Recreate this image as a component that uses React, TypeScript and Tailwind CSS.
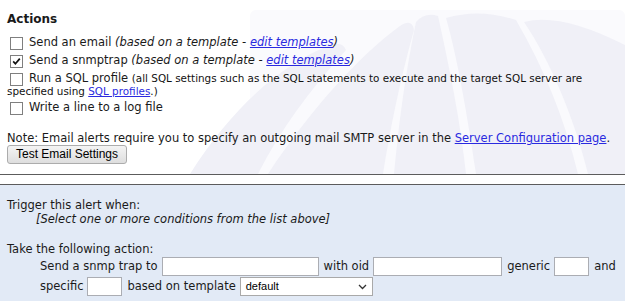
import React from "react";

function Box({ checked = false }: { checked?: boolean }) {
  return (
    <span className="inline-flex w-[13px] h-[13px] shrink-0 border border-[#7f7f7f] bg-white items-center justify-center">
      {checked && (
        <svg width="11" height="11" viewBox="0 0 11 11">
          <path d="M2.2 5.4 L4.4 7.8 L8.8 2.6" fill="none" stroke="#111" strokeWidth="1.7" />
        </svg>
      )}
    </span>
  );
}

function Watermark() {
  return (
    <svg className="absolute left-0 top-0 pointer-events-none" width="625" height="174" viewBox="0 0 625 174">
      <rect x="250" y="10" width="375" height="164" rx="6" fill="#fafafd" />
      <g fill="#f0f0f7">
        <path d="M190 174 C230 110 280 65 328 46 Q342 40 346 50 C310 90 280 130 258 174 Z" />
        <path d="M268 174 C310 110 360 55 400 26 Q412 18 414 30 C400 80 390 130 383 174 Z" />
        <path d="M394 174 C400 110 408 60 416 22 Q425 12 438 16 C450 70 460 120 466 174 Z" />
        <path d="M476 174 C468 120 458 60 446 18 Q480 8 516 20 C545 70 565 120 578 174 Z" />
        <path d="M588 174 C575 120 550 60 524 22 Q560 12 625 45 L625 174 Z" />
      </g>
    </svg>
  );
}

const link = "text-[#2a2ae0] underline";

function Input({ w }: { w: string }) {
  return <span className={`inline-block h-[19px] border border-[#abadb3] bg-white ${w}`} />;
}

export default function App() {
  return (
    <div className="w-[625px] h-[301px] overflow-hidden bg-white text-[#1a1a1a] font-['DejaVu_Sans',Verdana,sans-serif] text-[11.5px]">
      <div className="relative h-[174px] px-[7px] pt-[11px]">
        <Watermark />
        <div className="relative">
          <div className="font-bold text-[12px] leading-[16px]">Actions</div>
          <div className="mt-[7px]">
            <div className="h-[18px] flex items-center pl-[3px] gap-[6px] whitespace-nowrap">
              <Box />
              <span>
                Send an email <i>(based on a template - <span className={link}>edit templates</span>)</i>
              </span>
            </div>
            <div className="h-[18px] flex items-center pl-[3px] gap-[6px] whitespace-nowrap">
              <Box checked />
              <span>
                Send a snmptrap <i>(based on a template - <span className={link}>edit templates</span>)</i>
              </span>
            </div>
            <div className="h-[18px] flex items-center pl-[3px] gap-[6px] whitespace-nowrap">
              <Box />
              <span>
                Run a SQL profile{" "}
                <span className="text-[10.4px] text-[#111]">
                  (all SQL settings such as the SQL statements to execute and the target SQL server are
                </span>
              </span>
            </div>
            <div className="mt-[-3px] h-[12px] leading-[12px] text-[10.4px] text-[#111] whitespace-nowrap">
              specified using <span className={link}>SQL profiles</span>.)
            </div>
            <div className="mt-[2px] h-[18px] flex items-center pl-[3px] gap-[6px] whitespace-nowrap">
              <Box />
              <span>Write a line to a log file</span>
            </div>
          </div>
          <div className="mt-[14px] leading-[14px] whitespace-nowrap">
            Note: Email alerts require you to specify an outgoing mail SMTP server in the{" "}
            <span className={link}>Server Configuration page</span>.
          </div>
          <button className="h-[19px] px-[8px] border border-[#acacac] rounded-[3px] bg-gradient-to-b from-[#f4f4f4] to-[#dedede] font-['Liberation_Sans',Arial,sans-serif] text-[12px] leading-[17px] text-black">
            Test Email Settings
          </button>
        </div>
      </div>
      <div className="h-px bg-[#5c5c5c]" />
      <div className="h-[9px]" />
      <div className="h-px bg-[#5c5c5c]" />
      <div className="h-[116px] bg-[#e2eaf6] px-[7px] pt-[13px] whitespace-nowrap">
        <div className="leading-[14px]">Trigger this alert when:</div>
        <div className="leading-[14px] pl-[29px] italic">[Select one or more conditions from the list above]</div>
        <div className="mt-[16px] leading-[14px]">Take the following action:</div>
        <div className="pl-[33px]">
          <div className="h-[19px] flex items-center gap-[4px] mt-[1px]">
            <span>Send a snmp trap to</span>
            <Input w="w-[157px]" />
            <span className="ml-[1px]">with oid</span>
            <Input w="w-[129px]" />
            <span className="ml-[1px]">generic</span>
            <Input w="w-[35px]" />
            <span className="ml-[1px]">and</span>
          </div>
          <div className="h-[19px] flex items-center gap-[4px] mt-[1px]">
            <span>specific</span>
            <Input w="w-[35px]" />
            <span className="ml-[1px]">based on template</span>
            <span className="relative inline-flex items-center h-[19px] w-[133px] border border-[#a9a9a9] bg-white pl-[5px] font-['Liberation_Sans',Arial,sans-serif] text-[11px] text-black">
              default
              <svg className="absolute right-[5px] top-[6px]" width="9" height="6" viewBox="0 0 9 6">
                <path d="M1 1 L4.5 4.5 L8 1" fill="none" stroke="#333" strokeWidth="1.3" />
              </svg>
            </span>
          </div>
        </div>
      </div>
    </div>
  );
}
